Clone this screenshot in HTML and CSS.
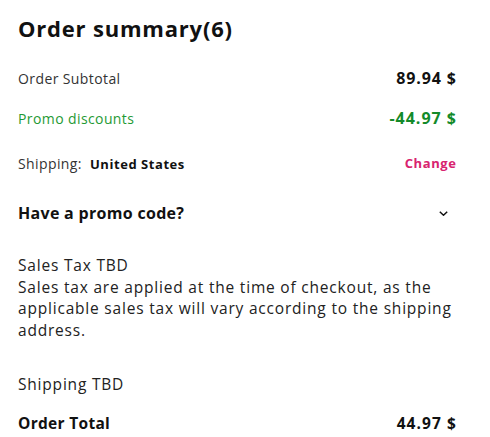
FILE: index.html
```html
<!DOCTYPE html>
<html lang="en">
<head>
<meta charset="utf-8">
<link rel="stylesheet" href="styles.css">
</head>
<body>
<div class="summary">
  <h1 class="title">Order summary(6)</h1>
  <div class="row row-subtotal">
    <span class="label">Order Subtotal</span>
    <span class="value">89.94 $</span>
  </div>
  <div class="row row-promo">
    <span class="label promo-label">Promo discounts</span>
    <span class="value promo-value">-44.97 $</span>
  </div>
  <div class="row row-shipping">
    <span class="label">Shipping: <b class="country">United States</b></span>
    <a class="change">Change</a>
  </div>
  <div class="row row-code">
    <span class="code-label">Have a promo code?</span>
    <svg class="chevron" width="9" height="5" viewBox="0 0 9 5"><path d="M0.8 0.8 L4.5 4.2 L8.2 0.8" fill="none" stroke="#111" stroke-width="1.5"/></svg>
  </div>
  <div class="tax">
    <div class="tax-title">Sales Tax TBD</div>
    <p class="tax-text">Sales tax are applied at the time of checkout, as the applicable sales tax will vary according to the shipping address.</p>
  </div>
  <div class="ship-tbd">Shipping TBD</div>
  <div class="row row-total">
    <span class="total-label">Order Total</span>
    <span class="total-value">44.97 $</span>
  </div>
</div>
</body>
</html>
```
FILE: styles.css
```css
html, body {
  margin: 0;
  padding: 0;
  background: #fff;
}
body {
  font-family: "Open Sans", "Liberation Sans", sans-serif;
  color: #222;
}
.summary {
  width: 438px;
  padding: 10px 0 0 18px;
}
.title {
  margin: 0;
  font-size: 22px;
  letter-spacing: 0.8px;
  font-weight: 700;
  color: #111;
  line-height: 36px;
}
.row {
  display: flex;
  justify-content: space-between;
  align-items: center;
}
.row-subtotal { margin-top: 20px; height: 24px; }
.row-promo { margin-top: 16px; height: 24px; }
.row-shipping { margin-top: 21px; height: 24px; }
.row-code { margin-top: 26px; height: 24px; }
.label {
  font-size: 14px;
  letter-spacing: 0.4px;
  color: #333;
}
.value {
  font-size: 16px;
  font-weight: 700;
  letter-spacing: 0.9px;
  margin-right: -0.9px;
  color: #111;
}
.promo-label { color: #1f9a35; }
.promo-value { color: #138a2a; letter-spacing: 1px; margin-right: -1px; }
.country {
  font-size: 13px;
  font-weight: 700;
  letter-spacing: 0.55px;
  color: #111;
  margin-left: 4px;
}
.change {
  font-size: 13px;
  font-weight: 700;
  letter-spacing: 0.6px;
  margin-right: -0.6px;
  color: #d8236f;
}
.code-label {
  font-size: 16px;
  font-weight: 700;
  letter-spacing: 0.3px;
  color: #111;
}
.chevron { margin-right: 8px; }
.tax { margin-top: 30px; }
.tax-title,
.tax-text,
.ship-tbd {
  font-size: 15.5px;
  letter-spacing: 0.8px;
  line-height: 21.5px;
  color: #222;
}
.tax-text { margin: 0; }
.ship-tbd { margin-top: 33px; }
.row-total { margin-top: 15px; height: 24px; }
.total-label,
.total-value {
  font-size: 15.5px;
  font-weight: 700;
  color: #111;
}
.total-label { letter-spacing: 0.3px; }
.total-value { letter-spacing: 1.1px; margin-right: -1.1px; }
```
